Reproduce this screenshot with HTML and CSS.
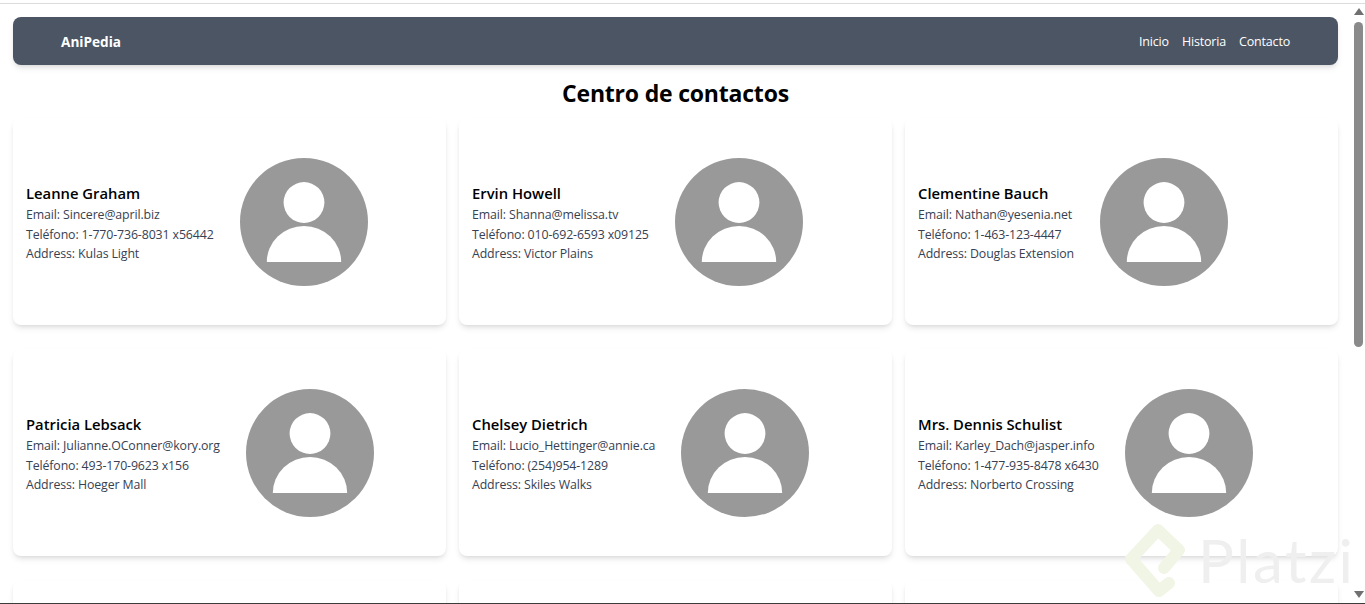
FILE: index.html
```html
<!DOCTYPE html>
<html lang="es">
<head>
<meta charset="utf-8">
<title>AniPedia</title>
<link rel="stylesheet" href="styles.css">
</head>
<body>
<div class="window">
  <div class="page">
    <nav class="navbar">
      <span class="brand">AniPedia</span>
      <ul class="links"><li>Inicio</li><li>Historia</li><li>Contacto</li></ul>
    </nav>
    <h1 class="title">Centro de contactos</h1>
    <div class="grid">
      <article class="card"><div class="info"><h2>Leanne Graham</h2><p>Email: Sincere@april.biz</p><p>Teléfono: 1-770-736-8031 x56442</p><p>Address: Kulas Light</p></div><svg class="avatar" viewBox="0 0 128 128"><circle cx="64" cy="64" r="64" fill="#999"/><circle cx="64" cy="44.5" r="20.4" fill="#fff"/><path d="M26.8 104a37.2 36 0 0 1 74.4 0z" fill="#fff"/></svg></article>
      <article class="card"><div class="info"><h2>Ervin Howell</h2><p>Email: Shanna@melissa.tv</p><p>Teléfono: 010-692-6593 x09125</p><p>Address: Victor Plains</p></div><svg class="avatar" viewBox="0 0 128 128"><circle cx="64" cy="64" r="64" fill="#999"/><circle cx="64" cy="44.5" r="20.4" fill="#fff"/><path d="M26.8 104a37.2 36 0 0 1 74.4 0z" fill="#fff"/></svg></article>
      <article class="card"><div class="info"><h2>Clementine Bauch</h2><p>Email: Nathan@yesenia.net</p><p>Teléfono: 1-463-123-4447</p><p>Address: Douglas Extension</p></div><svg class="avatar" viewBox="0 0 128 128"><circle cx="64" cy="64" r="64" fill="#999"/><circle cx="64" cy="44.5" r="20.4" fill="#fff"/><path d="M26.8 104a37.2 36 0 0 1 74.4 0z" fill="#fff"/></svg></article>
      <article class="card"><div class="info"><h2>Patricia Lebsack</h2><p>Email: Julianne.OConner@kory.org</p><p>Teléfono: 493-170-9623 x156</p><p>Address: Hoeger Mall</p></div><svg class="avatar" viewBox="0 0 128 128"><circle cx="64" cy="64" r="64" fill="#999"/><circle cx="64" cy="44.5" r="20.4" fill="#fff"/><path d="M26.8 104a37.2 36 0 0 1 74.4 0z" fill="#fff"/></svg></article>
      <article class="card"><div class="info"><h2>Chelsey Dietrich</h2><p>Email: Lucio_Hettinger@annie.ca</p><p>Teléfono: (254)954-1289</p><p>Address: Skiles Walks</p></div><svg class="avatar" viewBox="0 0 128 128"><circle cx="64" cy="64" r="64" fill="#999"/><circle cx="64" cy="44.5" r="20.4" fill="#fff"/><path d="M26.8 104a37.2 36 0 0 1 74.4 0z" fill="#fff"/></svg></article>
      <article class="card"><div class="info"><h2>Mrs. Dennis Schulist</h2><p>Email: Karley_Dach@jasper.info</p><p>Teléfono: 1-477-935-8478 x6430</p><p>Address: Norberto Crossing</p></div><svg class="avatar" viewBox="0 0 128 128"><circle cx="64" cy="64" r="64" fill="#999"/><circle cx="64" cy="44.5" r="20.4" fill="#fff"/><path d="M26.8 104a37.2 36 0 0 1 74.4 0z" fill="#fff"/></svg></article>
      <article class="card"></article>
      <article class="card"></article>
      <article class="card"></article>
    </div>
  </div>
  <div class="scrollbar">
    <svg class="arrow" viewBox="0 0 10 7"><path d="M5 0l5 7H0z" fill="#707070"/></svg>
    <div class="track"><div class="thumb"></div></div>
    <svg class="arrow" viewBox="0 0 10 7"><path d="M0 0h10L5 7z" fill="#707070"/></svg>
  </div>
  <div class="watermark">
    <svg class="wm-logo" viewBox="0 0 64 76"><path d="M46 61L36 69 8 37 35 8l21 20-15 18" fill="none" stroke="#f1f5e6" stroke-width="12" stroke-linejoin="round" stroke-linecap="round"/></svg>
    <span class="wm-text">Platzi</span>
  </div>
</div>
</body>
</html>
```
FILE: styles.css
```css
* { box-sizing: border-box; }
html, body { margin: 0; padding: 0; height: 100%; overflow: hidden; background: #fff; }
body { font-family: "Open Sans", "Noto Sans", sans-serif; color: #000; }

.window {
  position: relative;
  display: flex;
  height: 604px;
  overflow: hidden;
  border-top: 1px solid transparent;
  border-bottom: 1px solid #3c3c3c;
}
.window::before {
  content: "";
  position: absolute;
  top: 2px;
  left: 0;
  right: 0;
  height: 1px;
  background: #dcdcdc;
}

.page { flex: 1; min-width: 0; padding: 16px 14px 0 13px; }

.navbar {
  display: flex;
  align-items: center;
  justify-content: space-between;
  height: 48px;
  padding: 0 48px;
  background: #4b5563;
  border-radius: 8px;
  box-shadow: 0 4px 6px -1px rgba(0, 0, 0, .1), 0 2px 4px -2px rgba(0, 0, 0, .1);
  color: #fff;
}
.brand { font-size: 13.6px; font-weight: 700; }
.links { display: flex; gap: 13px; margin: 0; padding: 0; list-style: none; font-size: 12.5px; letter-spacing: -.18px; }

.title {
  margin: 13px 0 0;
  height: 40px;
  font-size: 23px;
  line-height: 30px;
  font-weight: 700;
  text-align: center;
  letter-spacing: -.2px;
}

.grid {
  display: grid;
  grid-template-columns: repeat(3, 433px);
  gap: 24px 13px;
}

.card {
  display: flex;
  align-items: center;
  gap: 26px;
  height: 207px;
  padding: 0 13px;
  border-radius: 8px;
  background: #fff;
  box-shadow: 0 4px 6px -1px rgba(0, 0, 0, .1), 0 2px 4px -2px rgba(0, 0, 0, .1);
}
.info { padding-top: 4px; white-space: nowrap; }
.info h2 { margin: 0 0 2px; font-size: 14.8px; line-height: 20px; font-weight: 600; }
.info p { margin: 0; font-size: 12.35px; line-height: 19.6px; color: #374151; letter-spacing: -.12px; }
.avatar { width: 128px; height: 128px; flex: none; }

.scrollbar {
  display: flex;
  flex-direction: column;
  align-items: center;
  flex: none;
  width: 13px;
  padding-top: 7px;
  background: #fff;
}
.arrow { width: 10px; height: 7px; flex: none; }
.track { flex: 1; width: 100%; padding: 7px 2px 0; }
.thumb { width: 9px; height: 325px; border-radius: 5px; background: #8a8a8a; }
.scrollbar .arrow:last-child { margin-bottom: 5px; }

.watermark {
  position: absolute;
  left: 1123px;
  top: 521px;
  display: flex;
  align-items: center;
  gap: 11px;
  pointer-events: none;
}
.wm-logo { width: 64px; height: 76px; }
.wm-text { font-family: "Lato", sans-serif; font-size: 60px; line-height: 76px; letter-spacing: 2.5px; color: #efefef; }
```
